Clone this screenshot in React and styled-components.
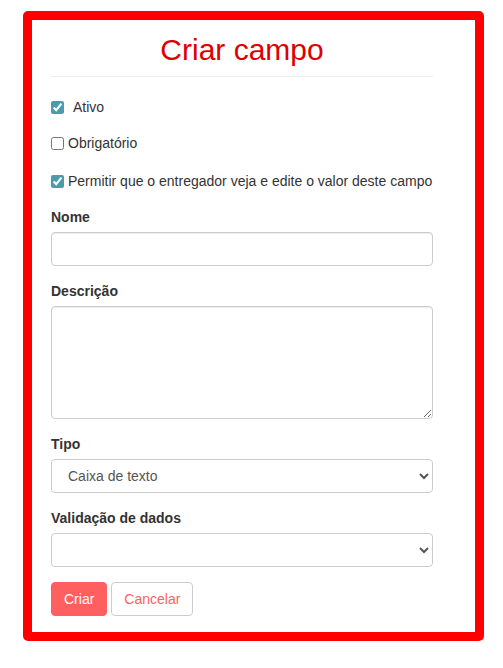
import React from "react";
import styled, { createGlobalStyle } from "styled-components";

const GlobalStyle = createGlobalStyle`
	* {
		box-sizing: border-box;
	}
	body {
		margin: 0;
		background: #fff;
		font-family: "Liberation Sans", Arial, sans-serif;
		font-size: 14px;
		color: #333;
	}
`;

const Page = styled.div`
	padding: 11px 19px 27px 23px;
`;

const Card = styled.div`
	width: 461px;
	border: 9px solid #ff0000;
	border-radius: 5px;
	padding: 13px 42px 16px 19px;
	background: #fff;
`;

const Title = styled.h2`
	margin: 0;
	font-size: 30px;
	font-weight: normal;
	line-height: 33px;
	text-align: center;
	color: #dd0000;
`;

const Divider = styled.hr`
	margin: 10px 0 0;
	border: 0;
	border-top: 1px solid #eee;
`;

const CheckRow = styled.label`
	display: flex;
	align-items: center;
	height: 20px;
	margin-top: ${(p) => p.$top}px;
	font-size: 14px;
	color: #333;
	cursor: pointer;
`;

const Check = styled.input.attrs({ type: "checkbox" })`
	width: 13px;
	height: 13px;
	margin: 0 ${(p) => p.$gap}px 0 0;
	accent-color: #4a9bab;
`;

const Fields = styled.form`
	margin-top: 16px;
`;

const Group = styled.div`
	margin-bottom: 15px;
`;

const Label = styled.label`
	display: block;
	margin-bottom: 5px;
	font-weight: bold;
	line-height: 20px;
	color: #333;
`;

const Input = styled.input`
	display: block;
	width: 100%;
	height: 34px;
	padding: 6px 12px;
	border: 1px solid #ccc;
	border-radius: 4px;
	font: inherit;
	color: #555;
	box-shadow: inset 0 1px 1px rgba(0, 0, 0, 0.075);
`;

const TextArea = styled.textarea`
	display: block;
	width: 100%;
	height: 113px;
	padding: 6px 12px;
	border: 1px solid #ccc;
	border-radius: 4px;
	font: inherit;
	color: #555;
	box-shadow: inset 0 1px 1px rgba(0, 0, 0, 0.075);
`;

const Select = styled.select`
	display: block;
	width: 100%;
	height: 34px;
	padding: 6px 8px 6px 12px;
	border: 1px solid #ccc;
	border-radius: 4px;
	background: #fff;
	font: inherit;
	color: #555;
`;

const Actions = styled.div`
	display: flex;
	gap: 4px;
`;

const Button = styled.button`
	height: 34px;
	padding: 6px 12px;
	border-radius: 4px;
	font: inherit;
	font-size: 14px;
	cursor: pointer;
	border: 1px solid ${(p) => (p.$primary ? "#ff5f5f" : "#ccc")};
	background: ${(p) => (p.$primary ? "#ff5f5f" : "#fff")};
	color: ${(p) => (p.$primary ? "#fff" : "#ff5f5f")};
`;

export default function App() {
	return (
		<>
			<GlobalStyle />
			<Page>
				<Card>
					<Title>Criar campo</Title>
					<Divider />

					<CheckRow $top={20}>
						<Check $gap={9} defaultChecked />
						Ativo
					</CheckRow>
					<CheckRow $top={16}>
						<Check $gap={4} />
						Obrigatório
					</CheckRow>
					<CheckRow $top={18}>
						<Check $gap={4} defaultChecked />
						Permitir que o entregador veja e edite o valor deste campo
					</CheckRow>

					<Fields onSubmit={(e) => e.preventDefault()}>
						<Group>
							<Label>Nome</Label>
							<Input type="text" />
						</Group>
						<Group>
							<Label>Descrição</Label>
							<TextArea />
						</Group>
						<Group>
							<Label>Tipo</Label>
							<Select defaultValue="texto">
								<option value="texto">Caixa de texto</option>
							</Select>
						</Group>
						<Group>
							<Label>Validação de dados</Label>
							<Select defaultValue="">
								<option value=""></option>
							</Select>
						</Group>
						<Actions>
							<Button $primary type="submit">
								Criar
							</Button>
							<Button type="button">Cancelar</Button>
						</Actions>
					</Fields>
				</Card>
			</Page>
		</>
	);
}
